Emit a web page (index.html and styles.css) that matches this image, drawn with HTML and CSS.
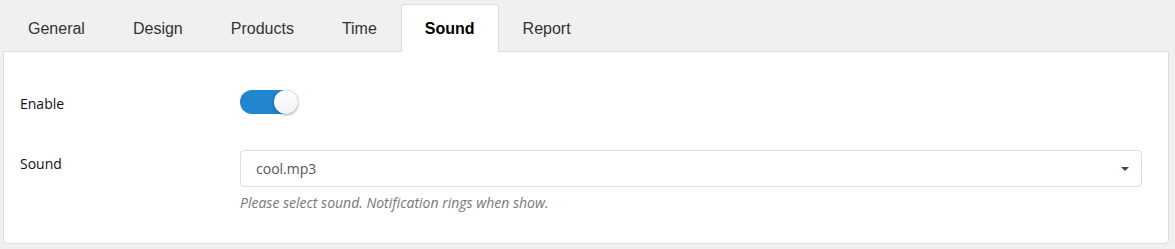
FILE: index.html
```html
<!DOCTYPE html>
<html lang="en">

<head>
  <meta charset="UTF-8">
  <meta name="viewport" content="width=device-width, initial-scale=1.0">
  <title> Settings </title>
  <link rel="stylesheet" href="styles.css">
</head>

<body>
  <ul class="tabs">
    <li>General</li>
    <li>Design</li>
    <li>Products</li>
    <li>Time</li>
    <li class="active">Sound</li>
    <li>Report</li>
  </ul>
  <div class="panel">
    <div class="form-row row-enable">
      <label class="form-label">Enable</label>
      <div class="form-field">
        <span class="switch on"><span class="knob"></span></span>
      </div>
    </div>
    <div class="form-row row-sound">
      <label class="form-label">Sound</label>
      <div class="form-field">
        <div class="select">
          <span class="select-text">cool.mp3</span>
          <span class="caret"></span>
        </div>
        <p class="help">Please select sound. Notification rings when show.</p>
      </div>
    </div>
  </div>
</body>

</html>
```

FILE: styles.css
```css
* {
  margin: 0;
  padding: 0;
  box-sizing: border-box;
}

ul {
  list-style: none;
}

body {
  background-color: #f0f0f0;
  padding: 4px 6px 0 3px;
  font-family: "Open Sans", "Liberation Sans", sans-serif;
}

.tabs {
  display: flex;
  margin-left: 1px;
}

.tabs li {
  height: 48px;
  line-height: 47px;
  padding: 0 23px;
  font-family: "Liberation Sans", Arial, sans-serif;
  font-size: 16px;
  color: #333;
  border: 1px solid transparent;
  border-bottom: none;
  cursor: pointer;
  margin-bottom: -1px;
  position: relative;
}

.tabs .active {
  background-color: #fff;
  border-color: #ddd;
  border-radius: 4px 4px 0 0;
  font-weight: bold;
  color: #000;
  z-index: 1;
}

.panel {
  background-color: #fff;
  border: 1px solid #ddd;
  border-radius: 0 0 4px 4px;
  padding: 38px 26px 30px 16px;
}

.form-row {
  display: flex;
}

.row-enable {
  align-items: center;
}

.row-sound {
  margin-top: 36px;
}

.form-label {
  width: 220px;
  flex-shrink: 0;
  font-size: 14px;
  color: #111;
  line-height: 20px;
}

.row-enable .form-label {
  padding-top: 3px;
}

.row-sound .form-label {
  padding-top: 4px;
}

.form-field {
  flex: 1;
}

.switch {
  display: block;
  width: 58px;
  height: 24px;
  border-radius: 12px;
  background-color: #2185d0;
  position: relative;
}

.switch .knob {
  position: absolute;
  top: 0;
  right: 0;
  width: 24px;
  height: 24px;
  border-radius: 50%;
  background: linear-gradient(#fff, #f2f2f2);
  box-shadow: 0 1px 3px rgba(0, 0, 0, .35);
}

.select {
  display: flex;
  align-items: center;
  justify-content: space-between;
  height: 37px;
  border: 1px solid #ddd;
  border-radius: 4px;
  padding: 0 12px 0 15px;
  font-size: 14px;
  color: #555;
}

.caret {
  width: 0;
  height: 0;
  border-left: 4px solid transparent;
  border-right: 4px solid transparent;
  border-top: 4px solid #4a3d50;
}

.help {
  margin-top: 6px;
  line-height: 20px;
  font-size: 14px;
  font-style: italic;
  color: #777;
}
```
